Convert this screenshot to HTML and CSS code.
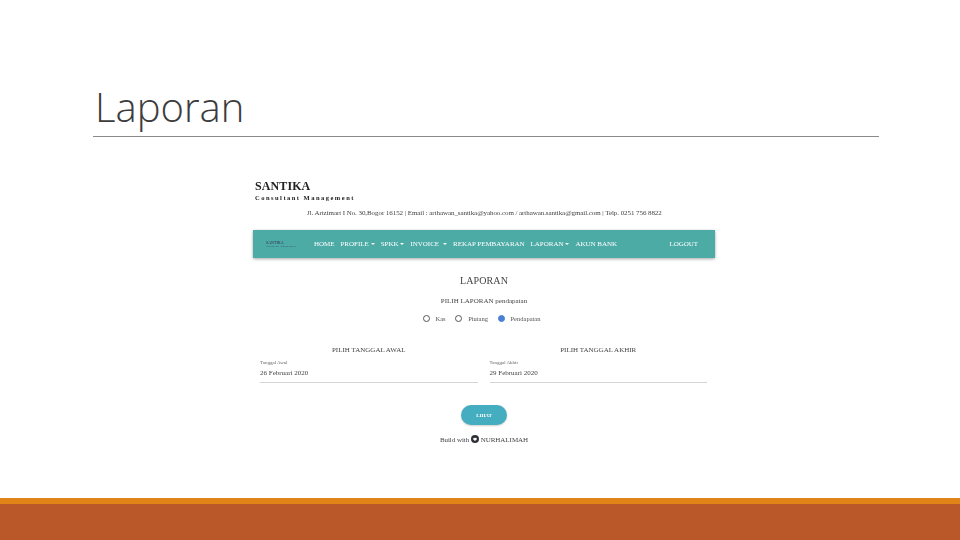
FILE: index.html
```html
<!DOCTYPE html>
<html lang="id">
<head>
<meta charset="utf-8">
<title>Laporan</title>
<link rel="stylesheet" href="styles.css">
</head>
<body>
<div class="slide">
  <header class="head"><h1>Laporan</h1></header>
  <main class="main">
    <div class="shot">
      <div class="brand">SANTIKA</div>
      <div class="tag">Consultant Management</div>
      <div class="addr">Jl. Artzimart I No. 30,Bogor 16152 | Email : arthawan_santika@yahoo.com / arthawan.santika@gmail.com | Telp. 0251 756 8822</div>
      <nav class="nav">
        <div class="logo"><span class="logo-a">SANTIKA</span><span class="logo-b">Consultant Management</span></div>
        <span class="item">HOME</span>
        <span class="item caret">PROFILE</span>
        <span class="item caret">SPKK</span>
        <span class="item caret wide">INVOICE</span>
        <span class="item">REKAP PEMBAYARAN</span>
        <span class="item caret">LAPORAN</span>
        <span class="item">AKUN BANK</span>
        <span class="item logout">LOGOUT</span>
      </nav>
      <h2 class="title">LAPORAN</h2>
      <div class="pick">PILIH LAPORAN <span class="pick-v">pendapatan</span></div>
      <div class="radios">
        <span class="radio"></span><span class="rlabel">Kas</span>
        <span class="radio"></span><span class="rlabel">Piutang</span>
        <span class="radio on"></span><span class="rlabel">Pendapatan</span>
      </div>
      <div class="dates">
        <div class="date">
          <div class="dhead">PILIH TANGGAL AWAL</div>
          <div class="dlabel">Tanggal Awal</div>
          <div class="dval">26 Februari 2020</div>
        </div>
        <div class="date">
          <div class="dhead">PILIH TANGGAL AKHIR</div>
          <div class="dlabel">Tanggal Akhir</div>
          <div class="dval">29 Februari 2020</div>
        </div>
      </div>
      <div class="btn">LIHAT</div>
      <div class="foot">Build with
        <svg class="ico" viewBox="0 0 10 10" width="8" height="8"><circle cx="5" cy="5" r="5" fill="#2f3338"/><path d="M5 7.6 2.7 5.2a1.3 1.3 0 0 1 2.3-1.1 1.3 1.3 0 0 1 2.3 1.1z" fill="#fff"/></svg>
        NURHALIMAH</div>
    </div>
  </main>
  <footer class="bars"><div class="bar-o"></div><div class="bar-b"></div></footer>
</div>
</body>
</html>
```
FILE: styles.css
```css
* { box-sizing: border-box; }
html, body { margin: 0; padding: 0; }
body { width: 960px; height: 540px; overflow: hidden; background: #fff; }
.slide { width: 960px; height: 540px; display: flex; flex-direction: column; }
.head { margin: 0 81px 0 93px; height: 137px; border-bottom: 1px solid #8a8a8a; display: flex; align-items: flex-end; }
h1 { margin: 0 0 4px 2px; font: 300 40px/50px "Open Sans", sans-serif; color: #3c3c3c; }
.main { flex: 1; padding: 41px 0 0 253px; }
.shot { width: 462px; font-family: "Liberation Serif", serif; color: #444; filter: blur(.4px); }
.brand { font-size: 12px; line-height: 16px; font-weight: 700; color: #222; padding-left: 2px; letter-spacing: .1px; }
.tag { font-size: 6.5px; line-height: 8px; letter-spacing: 1.48px; color: #222; padding-left: 2px; font-weight: 700; }
.addr { font-size: 7px; line-height: 10px; margin-top: 6px; padding-left: 54px; white-space: nowrap; color: #444; letter-spacing: -.07px; }
.nav { margin-top: 12px; height: 28px; background: #4dabA6; box-shadow: 0 1px 3px rgba(0,0,0,.35); display: flex; align-items: center; padding-left: 13px; color: #fff; font-size: 7px; white-space: nowrap; }
.logo { width: 48px; display: flex; flex-direction: column; color: #335; }
.logo-a { font-size: 4px; line-height: 4px; }
.logo-b { font-size: 2px; line-height: 3px; letter-spacing: .5px; }
.item { margin-right: 6px; letter-spacing: -.03px; }
.caret::after { content: ""; display: inline-block; margin-left: 2px; vertical-align: 1px; border: 2.5px solid transparent; border-top-color: #fff; border-bottom-width: 0; }
.wide::after { margin-left: 4px; }
.logout { margin-left: auto; margin-right: 17px; }
.title { margin: 16px 0 0; text-align: center; font-size: 10px; line-height: 14px; font-weight: 400; color: #444; letter-spacing: .1px; }
.pick { margin-top: 8px; text-align: center; font-size: 7px; line-height: 10px; color: #444; }
.radios { margin-top: 7px; height: 10px; display: flex; justify-content: center; align-items: center; font-size: 6.5px; padding-right: 5px; }
.radio { width: 7px; height: 7px; border: 1.5px solid #555; border-radius: 50%; margin-right: 6px; }
.radio.on { background: #4a7fd6; border-color: #4a7fd6; }
.rlabel { margin-right: 9.5px; color: #555; }
.rlabel:last-child { margin-right: 0; }
.dates { margin-top: 22px; display: flex; gap: 12px; padding: 0 8px 0 7px; }
.date { flex: 1; }
.dhead { text-align: center; font-size: 7px; line-height: 10px; color: #444; }
.dlabel { margin-top: 5px; font-size: 5px; line-height: 6px; color: #666; }
.dval { margin-top: 2px; font-size: 7px; line-height: 10px; color: #444; padding-bottom: 3.5px; border-bottom: 1px solid #d4d4d4; }
.btn { margin: 22.5px auto 0; width: 46px; height: 20px; border-radius: 10px; background: #45adc0; color: #fff; font-size: 5px; font-weight: 700; display: flex; align-items: center; justify-content: center; box-shadow: 0 1px 2px rgba(0,0,0,.2); }
.foot { margin-top: 10px; text-align: center; font-size: 7px; line-height: 10px; color: #444; letter-spacing: -.04px; }
.ico { vertical-align: -1px; }
.bars { flex: none; }
.bar-o { height: 6px; background: #e08417; }
.bar-b { height: 36px; background: #ba5829; }
```
